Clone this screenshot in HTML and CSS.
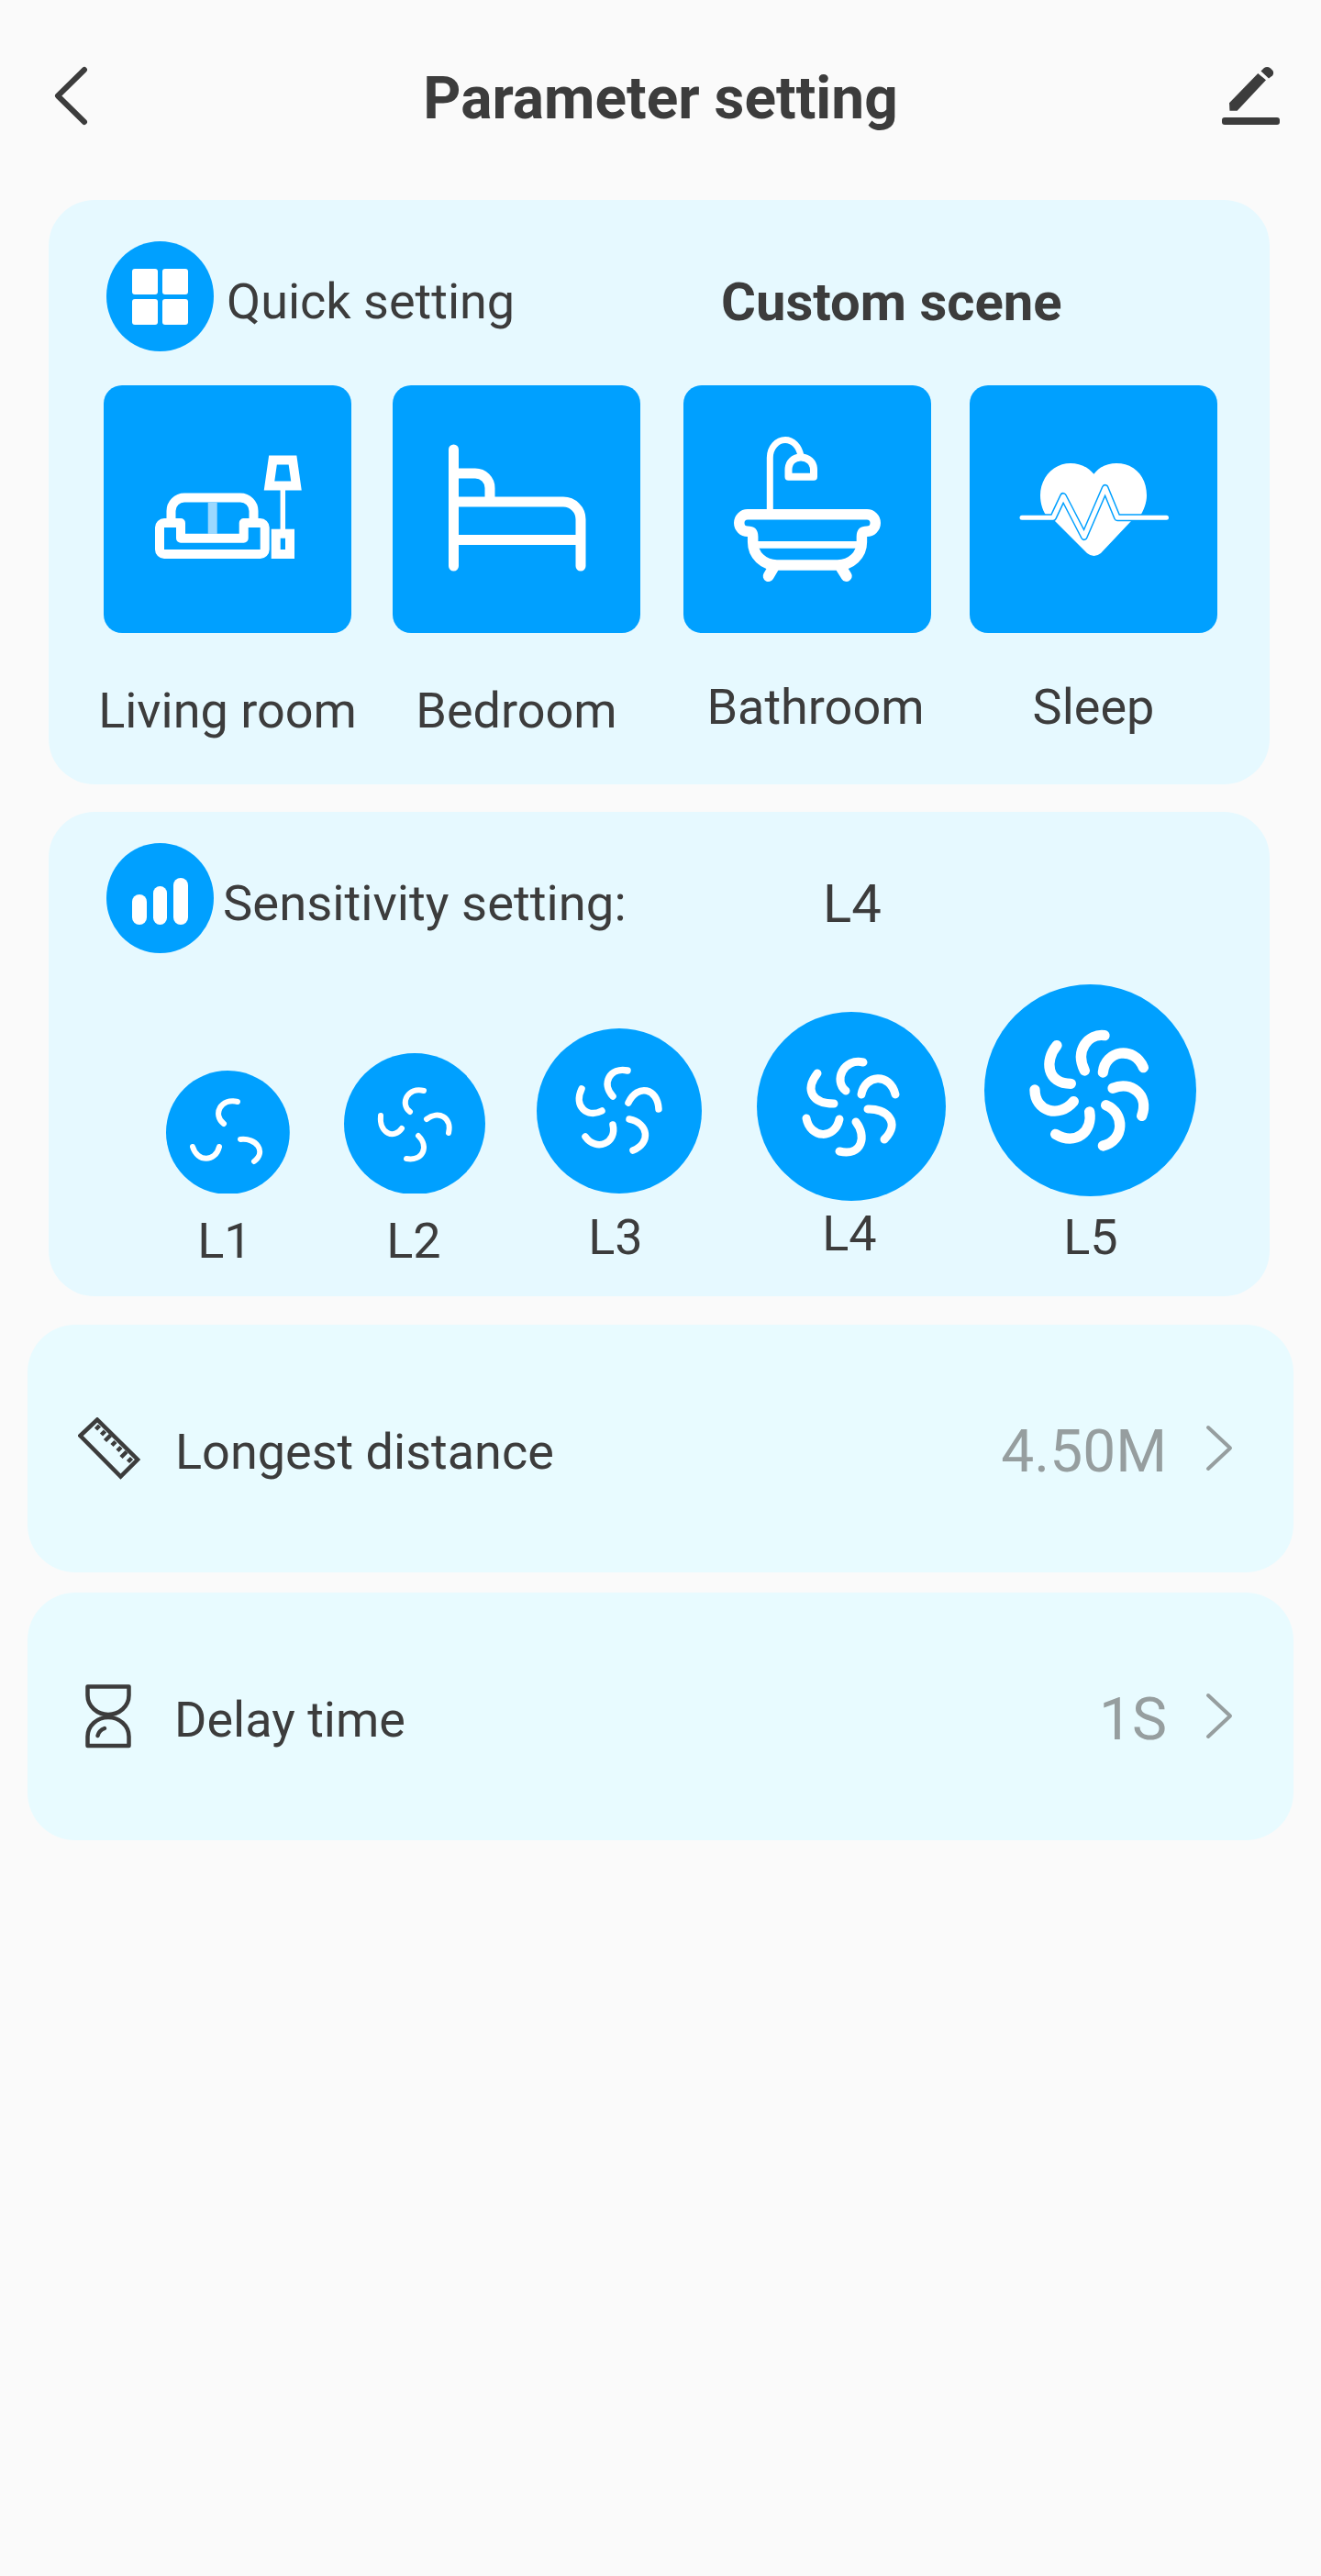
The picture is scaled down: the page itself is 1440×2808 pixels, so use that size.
FILE: index.html
```html
<!DOCTYPE html>
<html lang="en">
<head>
<meta charset="utf-8">
<title>Parameter setting</title>
<link rel="stylesheet" href="styles.css">
</head>
<body>
<div class="page">
  <header class="topbar">
    <svg class="back" width="40" height="66" viewBox="0 0 40 66"><path d="M34 5 L5 33.5 L34 62" /></svg>
    <h1 class="title">Parameter setting</h1>
    <svg class="pencil" width="63" height="63" viewBox="0 0 63 63">
      <rect x="0" y="55" width="63" height="8" rx="3"/>
      <path d="M8 39.3 L39.3 7 L48 14.3 L16.6 47.7 H8.5 Z"/>
      <path d="M42.5 4.6 L46 1 Q49.5 -1 53 1.5 L55.5 4 Q57 7 55 9.5 L51 12.5 Z"/>
    </svg>
  </header>

  <section class="card card-scene">
    <div class="head">
      <span class="badge badge-grid"><i></i><i></i><i></i><i></i></span>
      <span class="head-text quick">Quick setting</span>
      <span class="head-strong">Custom scene</span>
    </div>
    <div class="scenes">
      <div class="scene scene-living">
        <div class="tile">
          <svg class="tile-icon" width="270" height="270" viewBox="0 0 270 270">
            <path d="M73.5 148 V137 a14.5 14.5 0 0 1 14.5 -14.5 H149 a14.5 14.5 0 0 1 14.5 14.5 V148"/>
            <path d="M61 155 a5 5 0 0 1 5 -5 H84 V166.7 H152.7 V150 H170.7 a5 5 0 0 1 5 5 V179 a5 5 0 0 1 -5 5 H66 a5 5 0 0 1 -5 -5 Z" stroke-linejoin="round"/>
            <path class="soft" d="M118.7 127.5 V162"/>
            <path d="M184.5 81.5 H206 L210 109.5 H180.5 Z" stroke-linejoin="miter"/>
            <path class="thin" d="M195.3 114 V157"/>
            <rect x="187.7" y="161.7" width="15.3" height="22.3"/>
          </svg>
        </div>
        <span class="scene-label">Living room</span>
      </div>
      <div class="scene scene-bed">
        <div class="tile">
          <svg class="tile-icon bed" width="270" height="270" viewBox="0 0 270 270">
            <path d="M66.5 70 V197 M66.5 96 H90 a16 16 0 0 1 16 16 V127 M66.5 127 H186 a19 19 0 0 1 19 19 V197 M66.5 168.5 H205"/>
          </svg>
        </div>
        <span class="scene-label">Bedroom</span>
      </div>
      <div class="scene scene-bath">
        <div class="tile">
          <svg class="tile-icon" width="270" height="270" viewBox="0 0 270 270">
            <path class="bath-pipe" d="M94.3 136 V79 C94.3 68 102 59.5 111 59.5 C119 59.5 126 66 128 77"/>
            <path class="bath-head" d="M114.5 99.7 V92 C114.5 84 120 78.5 128 78.5 C136 78.5 142 84 142 92 V99.7 Z"/>
            <path class="bath-tub" d="M194.4 165 V171 C194.4 185 183 196 168 196 H102 C87 196 75.7 185 75.7 171 V165 C75.7 161 74 159.3 70 159.3 A9.25 9.25 0 0 1 70 140.8 H200 A9.25 9.25 0 0 1 200 159.3 C196 159.3 194.4 161 194.4 165 Z"/>
            <path class="bath-line" d="M78 173.8 H192"/>
            <path class="bath-foot" d="M98 199 L92.7 208 M172 199 L177.7 208"/>
          </svg>
        </div>
        <span class="scene-label">Bathroom</span>
      </div>
      <div class="scene scene-sleep">
        <div class="tile">
          <svg class="tile-icon" width="270" height="270" viewBox="0 0 270 270">
            <path class="heart" d="M135.4 96.7 C128 88 119 85 110 85 C90 85 77 102 77 120 C77 129 80 138 85 144 L93 148 L128 183 Q135.5 189 143 183 L176 148 L185 144 C190 136 193 128 193 120 C193 100 180 85 160 85 C151 85 142 88 135.4 96.7 Z"/>
            <path class="ecg-out" d="M54 144.3 H91 L102 121 L124.8 165 L147.7 112 L161 144.3 H217"/>
            <path class="ecg-in" d="M57 144.3 H91 L102 121 L124.8 165 L147.7 112 L161 144.3 H214.5"/>
          </svg>
        </div>
        <span class="scene-label">Sleep</span>
      </div>
    </div>
  </section>

  <section class="card card-sense">
    <div class="head">
      <span class="badge badge-bars"><i></i><i></i><i></i></span>
      <span class="head-text sense">Sensitivity setting:</span>
      <span class="head-value">L4</span>
    </div>
    <div class="fans">
      <div class="fan fan-1">
        <svg width="135" height="134" viewBox="0 0 135 134">
          <circle cx="67.4" cy="67.4" r="67.4"/>
          <path d="M78 34 C60 29 50 48 63 58 M29 83 C34 100 54 100 58 83 M81 75 C98 73 110 88 96 99"/>
        </svg>
        <span class="fan-label">L1</span>
      </div>
      <div class="fan fan-2">
        <svg width="154" height="153" viewBox="0 0 154 153">
          <circle cx="77" cy="77" r="77"/>
          <path d="M87 41 C70 36 60 55 72 64 M40 68 C38 88 55 94 63 82 M81 90 C93 102 86 118 68 115 M90 72 C103 62 118 70 114 87"/>
        </svg>
        <span class="fan-label">L2</span>
      </div>
      <div class="fan fan-3">
        <svg width="180" height="180" viewBox="0 0 180 180">
          <circle cx="90" cy="90" r="90"/>
          <path d="M99 46 C80 42 70 60 83 74 M49 66 C40 85 55 98 71 90 M53 118 C65 135 88 125 83 105 M101 99 C122 103 125 125 105 133 M100 81 C110 60 132 65 133 88"/>
        </svg>
        <span class="fan-label">L3</span>
      </div>
      <div class="fan fan-4">
        <svg width="206" height="206" viewBox="0 0 206 206">
          <circle cx="103" cy="103" r="103"/>
          <path d="M116 55 C95 50 83 75 97 86 M66 67 C52 85 60 100 84 100 M54 116 C58 138 85 140 90 117 M108 120 C120 135 115 158 90 152 M121 106 C140 105 158 120 139 139 M114 90 C118 68 145 66 151 90"/>
        </svg>
        <span class="fan-label">L4</span>
      </div>
      <div class="fan fan-5">
        <svg width="231" height="231" viewBox="10 10 693 693">
          <circle cx="356.5" cy="356.5" r="346.5"/>
          <path d="M403 177 C350 170 305 225 338 292 M247 210 C205 260 215 335 293 335 M175 355 C175 425 255 450 302 393 M354 427 C365 490 310 540 243 500 M408 405 C470 430 470 520 398 538 M430 350 C490 325 550 370 525 440 M398 298 C405 225 500 210 530 282"/>
        </svg>
        <span class="fan-label">L5</span>
      </div>
    </div>
  </section>

  <section class="row row-first">
    <svg class="row-icon ruler" width="68" height="68" viewBox="0 0 68 68">
      <path d="M2.5 20 L21 2.5 L65 46 L46.5 64.5 Z"/>
      <path d="M23.5 9 L19.5 13 M29.5 15 L25.5 19 M35.5 19.5 L29.5 25.5 M41 26.5 L37 30.5 M47 32.5 L43 36.5 M53 37.5 L47 43.5 M58.5 44.5 L54.5 48.5"/>
    </svg>
    <span class="row-label">Longest distance</span>
    <span class="row-value">4.50M</span>
    <svg class="chev" width="30" height="52" viewBox="0 0 30 52"><path d="M3 3 L27 25.5 L3 48"/></svg>
  </section>

  <section class="row row-second">
    <svg class="row-icon glass" width="52" height="70" viewBox="0 0 52 70">
      <path d="M3.5 2.5 H48.5 V12 C48.5 24 38 33 26 33 C14 33 3.5 24 3.5 12 Z"/>
      <path d="M3.5 67 V57 C3.5 45 14 36 26 36 C38 36 48.5 45 48.5 57 V67 Z"/>
      <path d="M14.5 56 C15.5 52 18 49.5 22 48"/>
    </svg>
    <span class="row-label label-delay">Delay time</span>
    <span class="row-value">1S</span>
    <svg class="chev" width="30" height="52" viewBox="0 0 30 52"><path d="M3 3 L27 25.5 L3 48"/></svg>
  </section>
</div>
</body>
</html>
```

FILE: styles.css
```css
* { box-sizing: border-box; }
html, body { margin: 0; padding: 0; }
body {
  background: #fafafa;
  color: #3c3c3c;
  font-family: Roboto, "Liberation Sans", sans-serif;
}
.page { width: 1440px; min-height: 2808px; }

.topbar {
  display: grid;
  grid-template-columns: 1fr auto 1fr;
  align-items: start;
  height: 218px;
  padding: 71px 45px 0;
}
.back { fill: none; stroke: #3c3c3c; stroke-width: 6; stroke-linecap: round; stroke-linejoin: round; margin-left: 13px; }
.pencil { fill: #3c3c3c; justify-self: end; margin-top: 2px; overflow: visible; }
.title {
  margin: -3px 0 0;
  font-size: 64px;
  line-height: 80px;
  font-weight: 700;
  white-space: nowrap;
  text-align: center;
}

.card {
  margin: 0 56px 0 53px;
  background: #e6f9ff;
  border-radius: 50px;
}
.card-scene { height: 637px; padding: 45px 0 0 60px; }
.card-sense { height: 528px; margin-top: 30px; padding: 34px 0 0 63px; }

.head { display: flex; align-items: flex-start; }
.card-scene .head { margin-left: 3px; }
.badge {
  flex: none;
  width: 117px;
  height: 120px;
  border-radius: 50%;
  background: #00a0ff;
}
.badge-grid {
  display: grid;
  grid-template-columns: 28px 28px;
  grid-template-rows: 28px 28px;
  gap: 5px;
  place-content: center;
}
.badge-grid i { background: #fff; border-radius: 3px; }
.badge-bars {
  display: flex;
  align-items: flex-end;
  justify-content: center;
  gap: 7px;
  padding-bottom: 31px;
}
.badge-bars i { display: block; width: 15.5px; background: #fff; border-radius: 8px; }
.badge-bars i:nth-child(1) { height: 33px; }
.badge-bars i:nth-child(2) { height: 42px; }
.badge-bars i:nth-child(3) { height: 51px; }

.head-text, .head-strong, .head-value {
  margin-top: 36px;
  font-size: 54px;
  line-height: 60px;
  white-space: nowrap;
}
.quick { margin-left: 14px; width: 539px; }
.head-strong { font-size: 58px; font-weight: 700; }
.sense { margin-left: 10px; width: 654px; font-size: 54.4px; }
.head-value { font-size: 58px; }

.scenes { display: flex; margin-top: 37px; }
.scene { display: flex; flex-direction: column; align-items: center; width: 270px; }
.scene-bed { margin-left: 45px; }
.scene-bath { margin-left: 47px; }
.scene-sleep { margin-left: 42px; }
.tile { width: 270px; height: 270px; border-radius: 20px; background: #00a0ff; }
.tile-icon { display: block; fill: none; stroke: #fff; stroke-width: 10; }
.tile-icon .soft { stroke: #9bd8ff; }
.tile-icon .thin { stroke-width: 5.5; }
.tile-icon.bed { stroke-width: 11; stroke-linecap: round; stroke-linejoin: round; }
.bath-pipe { stroke-width: 7; }
.bath-head { stroke-width: 8; stroke-linejoin: round; }
.bath-tub { stroke-width: 11.5; stroke-linejoin: round; }
.bath-line { stroke-width: 7.7; }
.bath-foot { stroke-width: 12; stroke-linecap: round; }
.heart { fill: #fff; stroke: none; }
.ecg-out { stroke: #00a0ff; stroke-width: 8; stroke-linejoin: round; stroke-linecap: round; }
.ecg-in { stroke: #fff; stroke-width: 5; stroke-linejoin: round; stroke-linecap: round; }
.scene-label {
  margin-top: 55px;
  font-size: 54px;
  line-height: 60px;
  white-space: nowrap;
}
.scene-bath .scene-label { margin-top: 51px; margin-left: 18px; }
.scene-sleep .scene-label { margin-top: 51px; }

.fans { display: flex; align-items: flex-start; margin-left: 65px; }
.fan { display: flex; flex-direction: column; align-items: center; flex: none; }
.fan svg { display: block; }
.fan circle { fill: #00a0ff; }
.fan path { fill: none; stroke: #fff; stroke-linecap: round; }
.fan-label { font-size: 54px; line-height: 60px; }
.fan-1 { margin-top: 128px; }
.fan-1 path { stroke-width: 6; }
.fan-1 .fan-label { margin-top: 22px; margin-right: 7px; }
.fan-2 { margin-top: 109px; margin-left: 59px; }
.fan-2 path { stroke-width: 6; }
.fan-2 .fan-label { margin-top: 22px; margin-right: 2px; }
.fan-3 { margin-top: 82px; margin-left: 56px; }
.fan-3 path { stroke-width: 7.5; }
.fan-3 .fan-label { margin-top: 18px; margin-right: 8px; }
.fan-4 { margin-top: 64px; margin-left: 60px; }
.fan-4 path { stroke-width: 9; }
.fan-4 .fan-label { margin-top: 6px; margin-right: 4px; }
.fan-5 { margin-top: 34px; margin-left: 42px; }
.fan-5 path { stroke-width: 34; }
.fan-5 .fan-label { margin-top: 15px; margin-left: 1px; }

.row {
  display: flex;
  align-items: center;
  height: 270px;
  margin: 0 30px;
  padding-right: 66px;
  background: #e8fbff;
  border-radius: 52px;
}
.row-first { margin-top: 31px; padding-left: 55px; }
.row-second { margin-top: 22px; padding-left: 62px; }
.row-icon { flex: none; fill: none; stroke: #3c3c3c; stroke-width: 4.5; }
.ruler { margin-right: 38px; }
.glass { margin-right: 46px; stroke-linejoin: round; stroke-linecap: round; }
.row-label { flex: 1; margin-top: 8px; font-size: 54px; line-height: 60px; }
.row-value { margin-top: 8px; font-size: 64px; line-height: 70px; color: #969e9f; }
.chev {
  flex: none;
  margin-left: 42px;
  fill: none;
  stroke: #969e9f;
  stroke-width: 4;
  stroke-linecap: round;
  stroke-linejoin: round;
}
```
